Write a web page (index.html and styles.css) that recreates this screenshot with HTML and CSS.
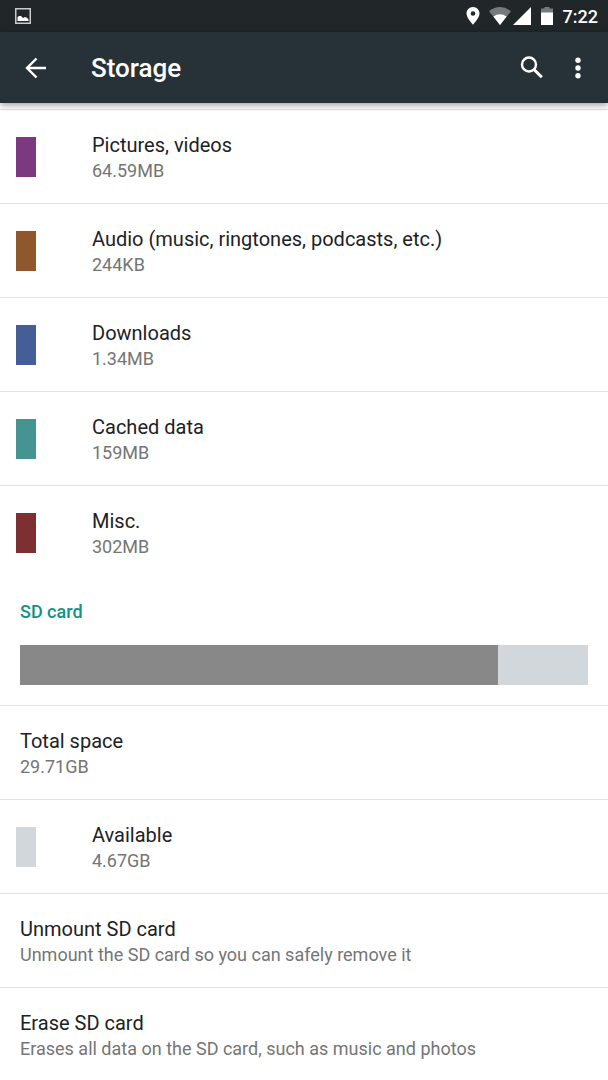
FILE: index.html
```html
<!DOCTYPE html>
<html lang="en">
<head>
  <meta charset="UTF-8">
  <meta name="viewport" content="width=device-width, initial-scale=1.0">
  <title>Storage</title>
  <link rel="stylesheet" href="styles.css">
</head>
<body>
  <div class="status-bar">
    <svg class="status-picture" width="16" height="16" viewBox="0 0 16 16">
      <rect x="0.75" y="0.75" width="14.5" height="14.5" fill="none" stroke="#c9cbcc" stroke-width="1.5"/>
      <path d="M2.5 13V9.2L4 8L6 8L8 10L10 9L12 9.8L13.5 11.5V13z" fill="#fff"/>
    </svg>
    <div class="status-icons">
      <svg width="14" height="18" viewBox="0 0 14 18">
        <path d="M7 0C3.1 0 0.5 3 0.5 6.4C0.5 11 7 17.6 7 17.6S13.5 11 13.5 6.4C13.5 3 10.9 0 7 0zM7 4.2a2.3 2.3 0 1 1 0 4.6a2.3 2.3 0 0 1 0-4.6z" fill="#fff"/>
      </svg>
      <svg class="wifi" width="22" height="18" viewBox="0 0 22 18">
        <path d="M0 4.2Q11-4.2 22 4.2L11 18z" fill="#777a7c"/>
        <path d="M4.4 9.6Q11 4.8 17.6 9.6L11 18z" fill="#fff"/>
      </svg>
      <svg class="signal" width="18" height="18" viewBox="0 0 18 18">
        <path d="M0 18L18 0V18z" fill="#fff"/>
      </svg>
      <svg class="battery" width="12" height="18" viewBox="0 0 12 18">
        <path d="M3.5 0H8.5V1.5H12V6H0V1.5H3.5z" fill="#777a7c"/>
        <path d="M0 5.5H12V18H0z" fill="#fff"/>
      </svg>
      <span class="clock">7:22</span>
    </div>
  </div>

  <header class="toolbar">
    <button class="icon-button" type="button" aria-label="Back">
      <svg width="22" height="22" viewBox="0 0 22 22">
        <path d="M21 11H2M11.5 1.5L2 11L11.5 20.5" fill="none" stroke="#fff" stroke-width="2.4"/>
      </svg>
    </button>
    <h1>Storage</h1>
    <button class="icon-button" type="button" aria-label="Search">
      <svg width="24" height="24" viewBox="0 0 24 24">
        <circle cx="9" cy="8.5" r="7" fill="none" stroke="#fff" stroke-width="2.4"/>
        <path d="M14 13.5L21.8 21.3" stroke="#fff" stroke-width="3"/>
      </svg>
    </button>
    <button class="icon-button menu-button" type="button" aria-label="More options">
      <svg width="6" height="22" viewBox="0 0 6 22">
        <circle cx="3" cy="3.3" r="2.7" fill="#fff"/>
        <circle cx="3" cy="11" r="2.7" fill="#fff"/>
        <circle cx="3" cy="18.7" r="2.7" fill="#fff"/>
      </svg>
    </button>
  </header>

  <main>
    <ul class="list">
      <li class="row">
        <span class="swatch pictures"></span>
        <div class="text">
          <p class="title">Pictures, videos</p>
          <p class="summary">64.59MB</p>
        </div>
      </li>
      <li class="row">
        <span class="swatch audio"></span>
        <div class="text">
          <p class="title">Audio (music, ringtones, podcasts, etc.)</p>
          <p class="summary">244KB</p>
        </div>
      </li>
      <li class="row">
        <span class="swatch downloads"></span>
        <div class="text">
          <p class="title">Downloads</p>
          <p class="summary">1.34MB</p>
        </div>
      </li>
      <li class="row">
        <span class="swatch cached"></span>
        <div class="text">
          <p class="title">Cached data</p>
          <p class="summary">159MB</p>
        </div>
      </li>
      <li class="row">
        <span class="swatch misc"></span>
        <div class="text">
          <p class="title">Misc.</p>
          <p class="summary">302MB</p>
        </div>
      </li>
    </ul>

    <h2>SD card</h2>
    <div class="usage">
      <div class="usage-used" style="width: 84.2%"></div>
    </div>
    <ul class="list">
      <li class="row">
        <div class="text">
          <p class="title">Total space</p>
          <p class="summary">29.71GB</p>
        </div>
      </li>
      <li class="row">
        <span class="swatch available"></span>
        <div class="text">
          <p class="title">Available</p>
          <p class="summary">4.67GB</p>
        </div>
      </li>
      <li>
        <button class="row" type="button">
          <span class="text">
            <span class="title">Unmount SD card</span>
            <span class="summary">Unmount the SD card so you can safely remove it</span>
          </span>
        </button>
      </li>
      <li>
        <button class="row last" type="button">
          <span class="text">
            <span class="title">Erase SD card</span>
            <span class="summary">Erases all data on the SD card, such as music and photos</span>
          </span>
        </button>
      </li>
    </ul>
  </main>
</body>
</html>
```
FILE: styles.css
```css
* { box-sizing: border-box; }
body {
  margin: 0;
  background-color: #fff;
  color: #1d2225;
  font-family: Roboto, "Liberation Sans", sans-serif;
}
h1, h2, p, ul {
  margin: 0;
  padding: 0;
}
svg {
  display: block;
}
button {
  border: 0;
  background: none;
  font-family: inherit;
  color: inherit;
  cursor: pointer;
}
.status-bar {
  display: flex;
  align-items: center;
  justify-content: space-between;
  height: 32px;
  padding: 0 10px 0 15px;
  background-color: #212628;
}
.status-icons {
  display: flex;
  align-items: center;
}
.wifi {
  margin-left: 9px;
}
.signal {
  margin-left: 2px;
}
.battery {
  margin-left: 10px;
}
.clock {
  margin-left: 10px;
  color: #fff;
  font-size: 18px;
  font-weight: 500;
}
.toolbar {
  position: relative;
  display: flex;
  align-items: center;
  height: 71px;
  padding: 0 8px 0 12px;
  background-color: #263238;
  box-shadow: 0 2px 7px rgba(0, 0, 0, .4);
  color: #fff;
}
.toolbar h1 {
  flex: 1;
  padding-left: 31px;
  font-size: 26px;
  font-weight: 500;
}
.icon-button {
  display: flex;
  align-items: center;
  justify-content: center;
  width: 48px;
  height: 48px;
  padding: 0;
}
.menu-button {
  width: 44px;
}
main {
  padding-top: 6px;
}
.list {
  list-style: none;
}
.row {
  display: flex;
  align-items: center;
  width: 100%;
  padding: 20px;
  border-top: 1px solid #e2e2e2;
}
button.row {
  text-align: left;
}
button.last {
  padding-bottom: 16px;
}
.text {
  padding-top: 1px;
}
.title, .summary, .text {
  display: block;
}
.title {
  font-size: 20px;
  line-height: 28px;
}
.summary {
  color: #757575;
  font-size: 18px;
  line-height: 24px;
}
.swatch {
  width: 20px;
  height: 40px;
  margin-left: -4px;
  margin-right: 56px;
}
.pictures { background-color: #7b3a80; }
.audio { background-color: #8f572c; }
.downloads { background-color: #455f96; }
.cached { background-color: #459491; }
.misc { background-color: #7c3032; }
.available { background-color: #d1d7db; }
h2 {
  padding: 0 20px;
  color: #109385;
  font-size: 18px;
  font-weight: 500;
  line-height: 66px;
}
.usage {
  height: 40px;
  margin: 0 20px 20px;
  background-color: #d1d7db;
}
.usage-used {
  height: 100%;
  background-color: #888;
}
```
